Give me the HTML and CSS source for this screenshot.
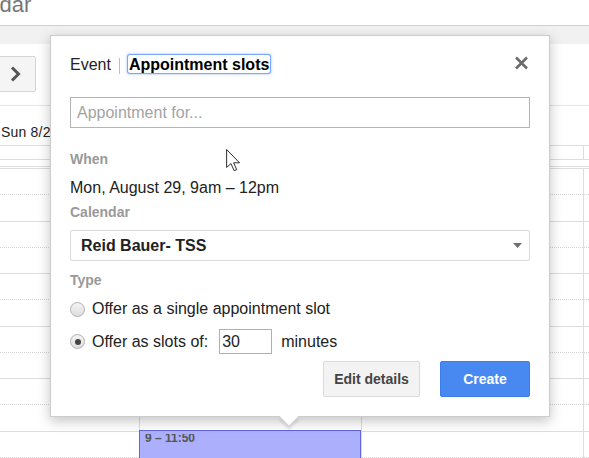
FILE: index.html
```html
<!DOCTYPE html>
<html>
<head>
<meta charset="utf-8">
<link rel="stylesheet" href="styles.css">
</head>
<body>
<div class="page">
  <header class="appbar"><span class="apptitle">Calendar</span></header>
  <div class="band"></div>
  <div class="nav">
    <button class="navbtn" type="button">
      <svg width="11" height="16" viewBox="0 0 11 16"><path d="M2 1.5 L8.5 8 L2 14.5" fill="none" stroke="#555" stroke-width="3"/></svg>
    </button>
  </div>
  <div class="dayheads"><span class="dayhead">Sun 8/28</span></div>
  <div class="allday"></div>
  <div class="gap"></div>
  <div class="grid">
    <div class="hour"><div class="half"></div></div>
    <div class="hour"><div class="half"></div></div>
    <div class="hour"><div class="half"></div></div>
    <div class="hour"><div class="half"></div></div>
    <div class="hour"><div class="half"></div></div>
    <div class="hour"><div class="half"></div></div>
    <div class="event"><div class="event-time">9 – 11:50</div></div>
  </div>

  <div class="popup">
    <div class="tabs">
      <span class="tab">Event</span>
      <span class="tab-sep"></span>
      <span class="tab tab-active">Appointment slots</span>
      <svg class="close" width="15" height="14" viewBox="0 0 15 14"><path d="M2 1.5 L13 12.5 M13 1.5 L2 12.5" stroke="#6b6b6b" stroke-width="2.5" fill="none"/></svg>
    </div>
    <input class="title-input" type="text" placeholder="Appointment for...">
    <div class="label label-when">When</div>
    <div class="value">Mon, August 29, 9am – 12pm</div>
    <div class="label label-cal">Calendar</div>
    <div class="select">
      <span class="select-text">Reid Bauer- TSS</span>
      <svg width="9" height="5" viewBox="0 0 9 5"><path d="M0 0 L9 0 L4.5 5 Z" fill="#707070"/></svg>
    </div>
    <div class="label label-type">Type</div>
    <div class="radio-row row-single">
      <span class="radio"></span>
      <span>Offer as a single appointment slot</span>
    </div>
    <div class="radio-row row-slots">
      <span class="radio radio-on"></span>
      <span>Offer as slots of:</span>
      <input class="mins" type="text" value="30">
      <span class="mins-label">minutes</span>
    </div>
    <div class="actions">
      <button class="btn btn-edit" type="button">Edit details</button>
      <button class="btn btn-create" type="button">Create</button>
    </div>
    <div class="popup-arrow"></div>
  </div>

  <svg class="cursor" width="16" height="23" viewBox="0 0 13 20" preserveAspectRatio="none">
    <path d="M0.5 0.5 L0.5 16 L4 12.7 L6.6 18.8 L8.7 17.9 L6.2 12 L11 12 Z" fill="#fff" stroke="#222" stroke-width="0.8" stroke-linejoin="miter"/>
  </svg>
</div>
</body>
</html>
```

FILE: styles.css
```css
* { box-sizing: border-box; }

html, body {
  margin: 0;
  padding: 0;
  background: #fff;
}

body {
  font-family: "Liberation Sans", Arial, sans-serif;
  color: #222;
}

.page {
  position: relative;
  width: 589px;
  height: 458px;
  overflow: hidden;
}

/* ---------- background calendar ---------- */
.appbar {
  height: 26px;
  border-bottom: 1px solid #d0d0d0;
  overflow: hidden;
}

.apptitle {
  display: block;
  margin: -6px 0 0 -58px;
  font-size: 22px;
  line-height: 22px;
  color: #777;
  white-space: nowrap;
}

.band {
  height: 18px;
  background: #f1f1f1;
}

.nav {
  height: 62px;
  padding-top: 12px;
  border-bottom: 1px solid #e5e5e5;
}

.navbtn {
  display: flex;
  align-items: center;
  justify-content: center;
  margin-left: -5px;
  width: 41px;
  height: 36px;
  padding: 0;
  border: 1px solid #d6d6d6;
  border-radius: 2px;
  background: #f5f5f5;
}

.dayheads {
  height: 40px;
  padding-top: 18px;
  border-bottom: 1px solid #ddd;
}

.dayhead {
  display: block;
  padding-left: 1px;
  font-size: 14px;
  letter-spacing: 0.2px;
  line-height: 16px;
  color: #222;
  white-space: nowrap;
}

.allday,
.grid {
  background-image: linear-gradient(90deg, #ddd 1px, transparent 1px);
  background-size: 222px 100%;
  background-position: 139px 0;
}

.allday {
  height: 14px;
  border-bottom: 1px solid #ddd;
}

.gap {
  height: 7px;
  border-bottom: 1px solid #ddd;
}

.grid {
  position: relative;
  margin-top: 1px;
}

.hour {
  height: 53px;
  border-top: 1px solid #ddd;
}

.hour:nth-child(even) {
  height: 52px;
}

.half {
  height: 26px;
  border-bottom: 1px dotted #d4d4d4;
}

.event {
  position: absolute;
  left: 139px;
  top: 262px;
  width: 222px;
  height: 60px;
  background: #abaffc;
  border: 1px solid #6366da;
}

.event-time {
  padding-left: 5px;
  font-size: 12px;
  font-weight: bold;
  line-height: 14px;
  color: #555;
  clip-path: inset(3px 0 0 0);
}

/* ---------- popup ---------- */
.popup {
  position: absolute;
  left: 50px;
  top: 35px;
  width: 500px;
  height: 382px;
  padding: 19px 19px 0;
  background: #fff;
  border: 1px solid rgba(0, 0, 0, 0.2);
  box-shadow: 0 4px 12px rgba(0, 0, 0, 0.24);
}

.tabs {
  display: flex;
  align-items: baseline;
  height: 19px;
}

.tab {
  font-size: 16px;
  line-height: 18px;
  color: #222;
}

.tab-sep {
  align-self: center;
  width: 1px;
  height: 16px;
  margin: 2px 8px 0 8px;
  background: #bdbdbd;
}

.tab-active {
  display: inline-block;
  padding: 2px 1px 0;
  line-height: 16px;
  font-weight: bold;
  color: #000;
  border-radius: 2px;
  box-shadow: 0 0 0 1px #7aa7f6, 0 0 2px 2px rgba(120, 165, 245, 0.35);
}

.close {
  margin-left: auto;
  margin-right: 1px;
}

.title-input {
  display: block;
  width: 460px;
  height: 31px;
  margin-top: 23px;
  padding: 0 6px;
  border: 1px solid #b4b4b4;
  border-radius: 0;
  font-family: "Liberation Sans", Arial, sans-serif;
  font-size: 16px;
  color: #222;
  outline: none;
}

.title-input::placeholder {
  color: #a3a3a3;
}

.label {
  font-size: 14px;
  font-weight: bold;
  line-height: 16px;
  color: #999;
}

.label-when { margin-top: 23px; }
.label-cal { margin-top: 7px; }
.label-type { margin-top: 11px; }

.value {
  margin-top: 12px;
  font-size: 16px;
  line-height: 18px;
  color: #222;
}

.select {
  display: flex;
  align-items: center;
  justify-content: space-between;
  height: 31px;
  margin-top: 10px;
  padding: 0 7px 0 10px;
  border: 1px solid #d9d9d9;
  border-radius: 2px;
}

.select-text {
  font-size: 16px;
  font-weight: bold;
  color: #222;
}

.radio-row {
  display: flex;
  align-items: center;
  font-size: 16px;
  line-height: 18px;
  color: #222;
}

.row-single {
  height: 18px;
  margin-top: 12px;
}

.row-slots {
  height: 25px;
  margin-top: 11px;
}

.radio {
  position: relative;
  flex: none;
  width: 15px;
  height: 15px;
  margin-right: 7px;
  border: 1px solid #b0b0b0;
  border-radius: 50%;
  background: linear-gradient(#f4f4f4, #dedede);
}

.radio-on::after {
  content: "";
  position: absolute;
  left: 3.5px;
  top: 3.5px;
  width: 6px;
  height: 6px;
  border-radius: 50%;
  background: #444;
}

.mins {
  width: 53px;
  height: 25px;
  margin: 0 9px 0 11px;
  padding: 0 2px;
  border: 1px solid #b0b0b0;
  border-radius: 0;
  font-family: "Liberation Sans", Arial, sans-serif;
  font-size: 16px;
  color: #222;
  outline: none;
}

.actions {
  display: flex;
  justify-content: flex-end;
  gap: 20px;
  margin-top: 7px;
}

.btn {
  height: 36px;
  padding: 0;
  border-radius: 2px;
  font-family: "Liberation Sans", Arial, sans-serif;
  font-size: 14px;
  font-weight: bold;
}

.btn-edit {
  width: 97px;
  background: #f3f3f3;
  border: 1px solid #dadada;
  color: #444;
}

.btn-create {
  width: 90px;
  background: #4889f1;
  border: 1px solid #3d7de6;
  color: #fff;
}

.popup-arrow {
  position: absolute;
  left: 231px;
  bottom: -8px;
  width: 14px;
  height: 14px;
  background: #fff;
  border-right: 1px solid rgba(0, 0, 0, 0.18);
  border-bottom: 1px solid rgba(0, 0, 0, 0.18);
  transform: rotate(45deg);
  box-shadow: 2px 2px 3px rgba(0, 0, 0, 0.12);
}

.cursor {
  position: absolute;
  left: 226px;
  top: 149px;
}
```
